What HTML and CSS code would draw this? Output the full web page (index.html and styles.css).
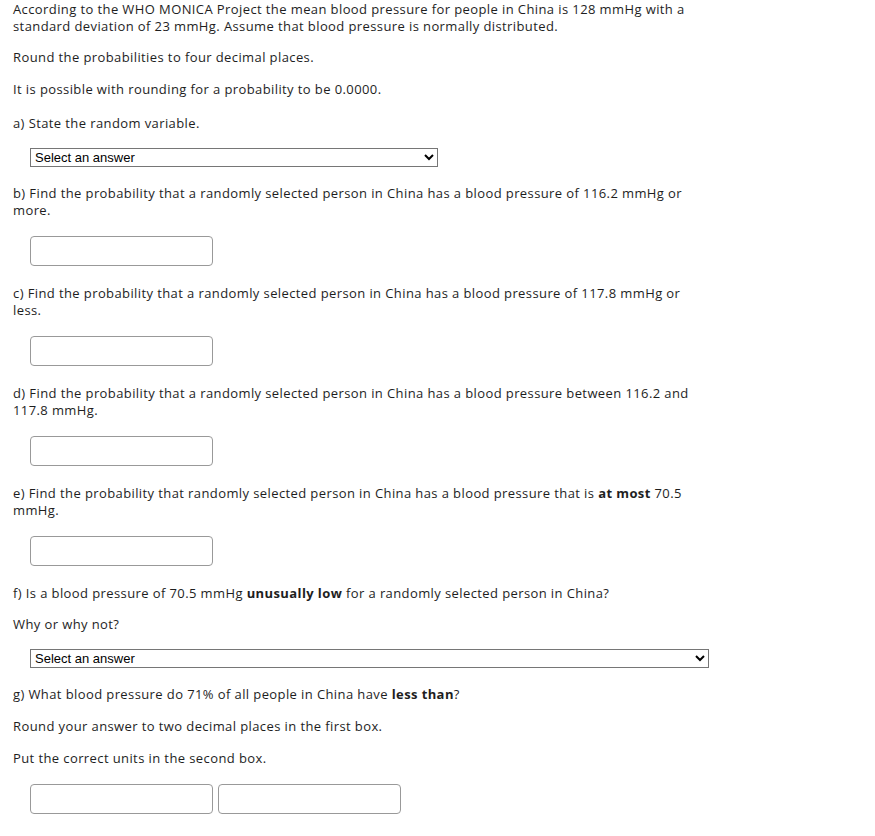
FILE: index.html
```html
<!DOCTYPE html>
<html>
<head>
<meta charset="utf-8">
<link rel="stylesheet" href="styles.css">
</head>
<body>
<div class="question">
  <p class="intro">According to the WHO MONICA Project the mean blood pressure for people in China is 128 mmHg with a standard deviation of 23 mmHg. Assume that blood pressure is normally distributed.</p>
  <p>Round the probabilities to four decimal places.</p>
  <p>It is possible with rounding for a probability to be 0.0000.</p>
  <p class="part">a) State the random variable.</p>
  <div class="indent"><select class="sel sel-a"><option>Select an answer</option></select></div>
  <p class="part">b) Find the probability that a randomly selected person in China has a blood pressure of 116.2 mmHg or more.</p>
  <div class="indent"><input class="box" type="text"></div>
  <p class="part">c) Find the probability that a randomly selected person in China has a blood pressure of 117.8 mmHg or less.</p>
  <div class="indent"><input class="box" type="text"></div>
  <p class="part">d) Find the probability that a randomly selected person in China has a blood pressure between 116.2 and 117.8 mmHg.</p>
  <div class="indent"><input class="box" type="text"></div>
  <p class="part">e) Find the probability that randomly selected person in China has a blood pressure that is <b>at most</b> 70.5 mmHg.</p>
  <div class="indent"><input class="box" type="text"></div>
  <p class="part tight">f) Is a blood pressure of 70.5 mmHg <b>unusually low</b> for a randomly selected person in China?</p>
  <p class="indent sub">Why or why not?</p>
  <div class="indent"><select class="sel sel-f"><option>Select an answer</option></select></div>
  <p class="part">g) What blood pressure do 71% of all people in China have <b>less than</b>?</p>
  <p class="indent sub">Round your answer to two decimal places in the first box.</p>
  <p class="indent sub last">Put the correct units in the second box.</p>
  <div class="indent row"><input class="box" type="text"><input class="box" type="text"></div>
</div>
</body>
</html>
```
FILE: styles.css
```css
html, body {
  margin: 0;
  padding: 0;
  background: #fff;
}
.question {
  padding: 1px 8px 0 13px;
  font-family: "Open Sans", "DejaVu Sans", sans-serif;
  font-size: 13px;
  letter-spacing: 0.4px;
  line-height: 17px;
  color: #1e1e1e;
  width: 682px;
}
.question p {
  margin: 0 0 15px;
}
.question p.intro {
  margin-bottom: 14px;
}
.question p.part {
  margin-top: 17px;
}
.question p.tight {
  margin-bottom: 14px;
}
.question p.last {
  margin-bottom: 14px;
}
.indent {
  margin-left: 17px;
}
.sel {
  display: block;
  height: 19px;
  font-family: "Liberation Sans", Arial, sans-serif;
  font-size: 13px;
  letter-spacing: 0;
  color: #000;
  border: 1px solid #767676;
  border-radius: 0;
  background: #fff;
  padding: 0;
  margin: 16px 0 18px;
}
.sel-a { width: 408px; }
.sel-f { width: 679px; }
.box {
  display: block;
  box-sizing: border-box;
  width: 183px;
  height: 30px;
  border: 1px solid #999;
  border-radius: 4px;
  margin: 17px 0 19px;
  background: #fff;
}
.row {
  display: flex;
  gap: 5px;
  margin-top: 17px;
}
.row .box {
  margin: 0;
}
```
